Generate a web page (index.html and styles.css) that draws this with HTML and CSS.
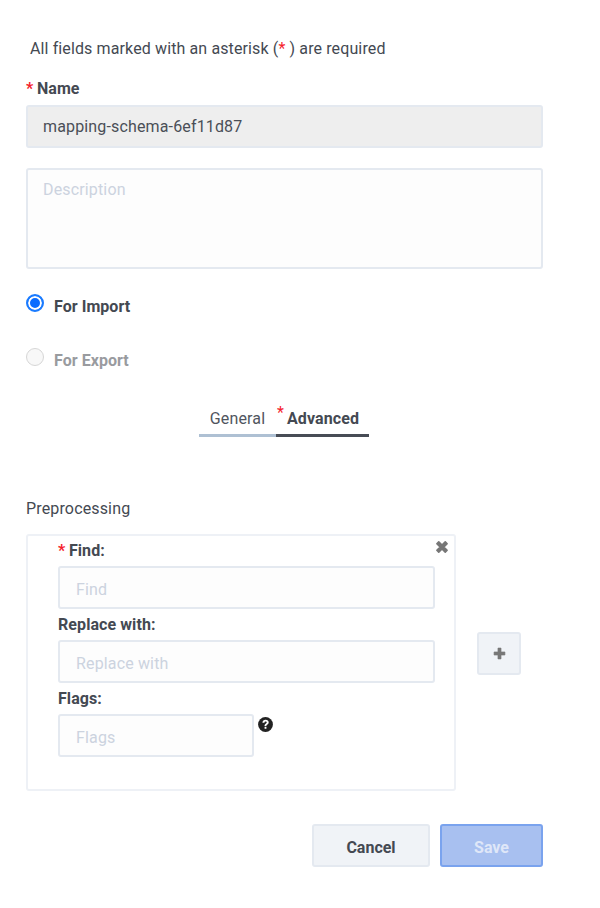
FILE: index.html
```html
<!DOCTYPE html>
<html lang="en">
<head>
<meta charset="utf-8">
<title>Mapping schema</title>
<link rel="stylesheet" href="styles.css">
</head>
<body>
<form class="form">
  <p class="notice">All fields marked with an asterisk (<span class="req">*</span> ) are required</p>
  <label class="label name-label"><span class="req req-label">*</span> Name</label>
  <div class="input input-disabled name-input">mapping-schema-6ef11d87</div>
  <div class="input textarea placeholder">Description</div>
  <div class="radio-row import-row">
    <span class="radio radio-on"></span><span class="radio-text">For Import</span>
  </div>
  <div class="radio-row export-row">
    <span class="radio radio-off"></span><span class="radio-text radio-text-off">For Export</span>
  </div>
  <div class="tabs">
    <div class="tab tab-general">General</div>
    <div class="tab tab-advanced"><span class="tab-star">*</span>Advanced</div>
  </div>
  <div class="section-title">Preprocessing</div>
  <div class="pre-row">
    <div class="card">
      <svg class="close-icon" viewBox="0 0 12 12" aria-hidden="true"><path d="M1.6 3.2 3.2 1.6 6 4.4 8.8 1.6 10.4 3.2 7.6 6 10.4 8.8 8.8 10.4 6 7.6 3.2 10.4 1.6 8.8 4.4 6Z" stroke="#777" stroke-width="1.4" stroke-linejoin="round" fill="#777"/></svg>
      <label class="label field-label"><span class="req req-label">*</span> Find:</label>
      <div class="input small placeholder">Find</div>
      <label class="label field-label">Replace with:</label>
      <div class="input small placeholder">Replace with</div>
      <label class="label field-label">Flags:</label>
      <div class="flags-row">
        <div class="input small flags placeholder">Flags</div>
        <svg class="help-icon" viewBox="0 0 16 16" aria-hidden="true"><circle cx="8" cy="8" r="7.9" fill="#222"/><path d="M4.7 6C4.8 4.2 6.2 3 8.1 3 10 3 11.4 4.2 11.4 5.8 11.4 7 10.7 7.6 9.8 8.2 9.1 8.6 9 8.9 9 9.6H7C6.9 8.4 7.3 7.7 8.2 7.1 9 6.6 9.3 6.4 9.3 5.9 9.3 5.3 8.8 4.9 8.1 4.9 7.4 4.9 6.9 5.3 6.8 6Z" fill="#fff"/><rect x="7" y="10.4" width="2" height="2.1" rx=".3" fill="#fff"/></svg>
      </div>
    </div>
    <button type="button" class="add-btn" aria-label="Add">
      <svg class="plus-icon" viewBox="0 0 12 12" aria-hidden="true"><path d="M4.6 1H7.4V4.6H11V7.4H7.4V11H4.6V7.4H1V4.6H4.6Z" fill="#777" stroke="#777" stroke-width=".6" stroke-linejoin="round"/></svg>
    </button>
  </div>
  <div class="actions">
    <button type="button" class="btn btn-cancel">Cancel</button>
    <button type="button" class="btn btn-save">Save</button>
  </div>
</form>
</body>
</html>
```
FILE: styles.css
```css
* { box-sizing: border-box; }
html, body { margin: 0; padding: 0; background: #fff; }
body {
  width: 600px;
  height: 908px;
  overflow: hidden;
  font-family: Roboto, "Liberation Sans", sans-serif;
  color: #444952;
  font-size: 16px;
  letter-spacing: .15px;
}
.form { padding: 39px 57px 0 26px; }
.notice { margin: 0 0 0 4px; line-height: 19px; height: 19px; letter-spacing: .12px; color: #444952; }
.req { color: #f5222d; }
.req-label { margin-right: -.5px; }
.label { display: block; font-weight: 700; font-size: 16px; line-height: 19px; letter-spacing: .08px; }
.name-label { margin-top: 21px; height: 19px; }
.input {
  border: 2px solid #e4e9f0;
  border-radius: 3px;
  background: #fdfdfd;
  font-size: 16px;
  padding-left: 15px;
}
.name-input {
  margin-top: 7px;
  height: 43px;
  line-height: 39px;
  background: #eeeeee;
  color: #4a4e57;
}
.textarea { margin-top: 20px; height: 101px; padding-top: 11px; line-height: 18px; }
.placeholder { color: #ccd3df; }
.radio-row { display: flex; align-items: center; height: 20px; }
.import-row { margin-top: 27px; }
.export-row { margin-top: 34px; }
.radio {
  width: 18px;
  height: 18px;
  border-radius: 50%;
  flex: none;
  margin: -6px 0 0 -.5px;
}
.radio-on { border: 2px solid #1a7bff; background: #0a6cff; box-shadow: inset 0 0 0 2px #fff; }
.radio-off { border: 1px solid #d6d6d6; background: #f8f8f8; }
.radio-text { margin-left: 10.5px; font-weight: 700; color: #444952; letter-spacing: .05px; }
.radio-text-off { color: #999b9f; }
.tabs { display: flex; margin: 37px 0 0 173px; width: 170px; }
.tab { height: 30px; line-height: 23px; border-bottom: 3px solid; text-align: center; position: relative; }
.tab-general { width: 77px; border-color: #aec0d3; color: #50555e; }
.tab-advanced { width: 93px; border-color: #474c55; font-weight: 700; padding-left: 1px; letter-spacing: .1px; }
.tab-star { position: absolute; left: 1px; top: -6px; color: #f5222d; font-weight: 400; font-size: 16px; }
.section-title { margin-top: 62px; line-height: 19px; height: 19px; color: #444952; }
.pre-row { display: flex; align-items: center; margin-top: 16px; }
.card {
  position: relative;
  width: 430px;
  height: 257px;
  border: 2px solid #eef1f6;
  border-radius: 3px;
  padding: 5px 19px 0 30px;
}
.close-icon { position: absolute; right: 5px; top: 4px; width: 14px; height: 14px; }
.field-label { height: 19px; }
.small { height: 43px; line-height: 43px; margin: 6px 0; padding-left: 16px; }
.flags-row { display: flex; align-items: flex-start; }
.flags { width: 196px; }
.help-icon { width: 15px; height: 15px; margin: 9px 0 0 4px; flex: none; }
.add-btn {
  width: 44px;
  height: 43px;
  margin-left: 21px;
  margin-top: -18px;
  border: 2px solid #e4e9f0;
  border-radius: 3px;
  background: #f0f3f7;
  display: flex;
  align-items: center;
  justify-content: center;
  padding: 0;
}
.plus-icon { width: 13px; height: 13px; }
.actions { display: flex; justify-content: flex-end; gap: 10px; margin-top: 33px; }
.btn {
  height: 43px;
  border-radius: 3px;
  font: 700 16px Roboto, "Liberation Sans", sans-serif;
  padding: 3px 0 0;
}
.btn-cancel { width: 118px; border: 2px solid #e4e9f0; background: #f0f3f7; color: #444952; }
.btn-save { width: 103px; border: 2px solid #7aa3ee; background: #a8c0f0; color: #dfe7f8; }
```
